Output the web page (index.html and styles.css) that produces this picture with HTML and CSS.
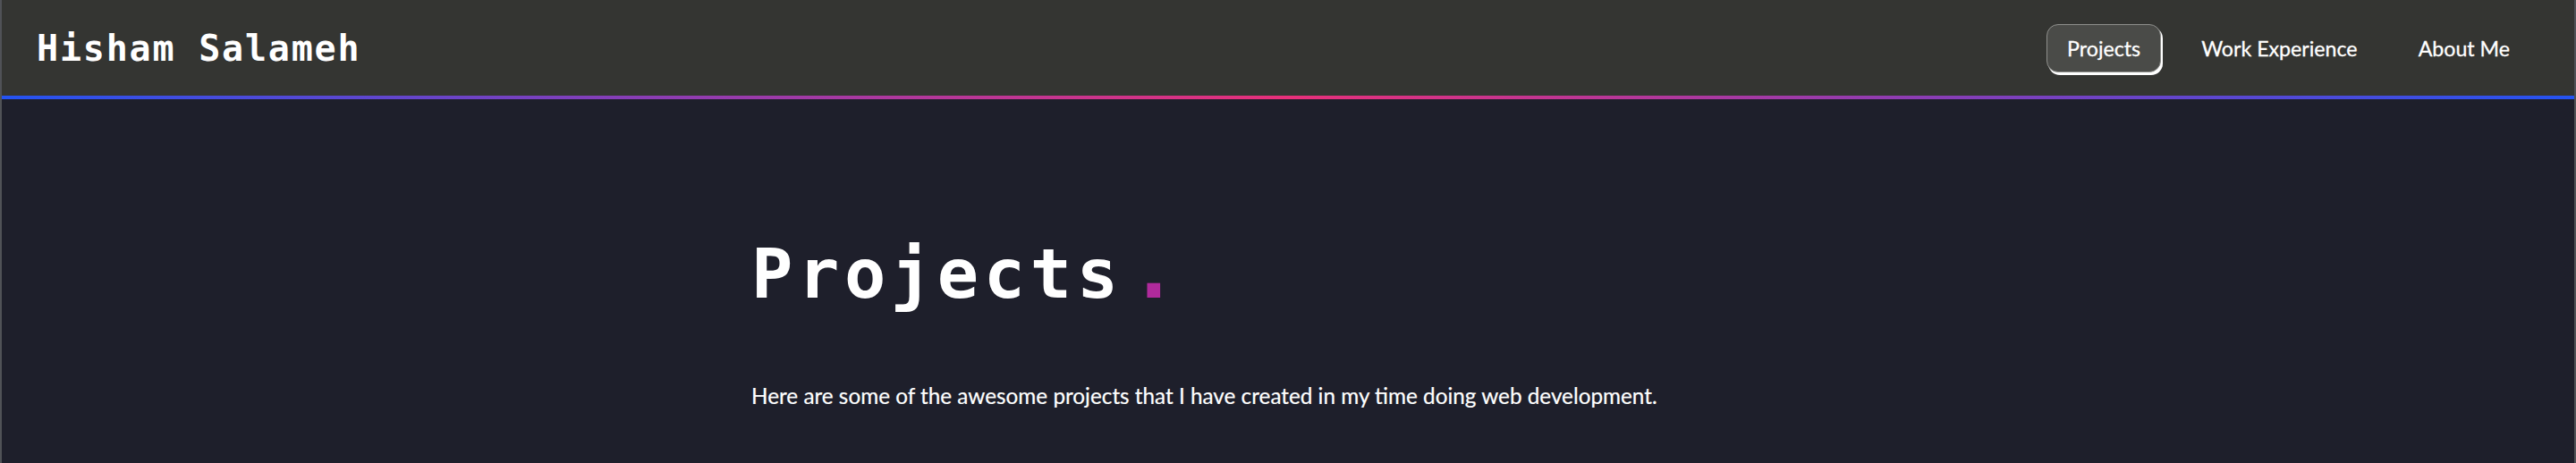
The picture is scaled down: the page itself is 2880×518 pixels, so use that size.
FILE: index.html
```html
<!DOCTYPE html>
<html lang="en">
<head>
<meta charset="utf-8">
<title>Hisham Salameh - Projects</title>
<link rel="stylesheet" href="styles.css">
</head>
<body>
<div class="frame">
  <header class="site-header">
    <a class="brand" href="#">Hisham Salameh</a>
    <nav class="nav">
      <a class="nav-link active" href="#">Projects</a>
      <a class="nav-link" href="#">Work Experience</a>
      <a class="nav-link" href="#">About Me</a>
    </nav>
  </header>
  <div class="rule"></div>
  <main class="content">
    <h1 class="title">Projects<span class="dot">.</span></h1>
    <p class="intro">Here are some of the awesome projects that I have created in my time doing web development.</p>
  </main>
</div>
</body>
</html>
```

FILE: styles.css
```css
html, body {
  margin: 0;
  padding: 0;
  background: #1e1f2b;
}

.frame {
  min-height: 518px;
  box-sizing: border-box;
  border-left: 2px solid #505257;
  border-right: 2px solid #505257;
  background: #1e1f2b;
  color: #ffffff;
  font-family: Lato, "Noto Sans", sans-serif;
}

.site-header {
  height: 107px;
  background: #343532;
  display: flex;
  align-items: center;
  justify-content: space-between;
  padding: 0 49px 0 39px;
}

.brand {
  font-family: "DejaVu Sans Mono", monospace;
  font-weight: bold;
  font-size: 40px;
  letter-spacing: 1.8px;
  color: #ffffff;
  text-decoration: none;
}

.nav {
  display: flex;
  align-items: center;
  gap: 22px;
}

.nav-link {
  font-family: Lato, "Noto Sans", sans-serif;
  font-size: 23.2px;
  line-height: 30px;
  color: #ffffff;
  text-decoration: none;
  padding: 11px 22px;
  border: 1px solid transparent;
  border-radius: 13px;
  -webkit-text-stroke: 0.3px #ffffff;
}

.nav-link.active {
  background: #4a4b48;
  border-color: #8f908d;
  box-shadow: 2px 3px 0 0 #ffffff;
}

.rule {
  height: 4px;
  background: linear-gradient(90deg, #2453f2 0%, #8a3db5 25%, #e8307a 50%, #8a3db5 75%, #2453f2 100%);
}

.content {
  max-width: 1200px;
  margin: 0 auto;
  padding-top: 157px;
}

.title {
  margin: 0;
  font-family: "DejaVu Sans Mono", monospace;
  font-weight: bold;
  font-size: 77px;
  line-height: 1;
  letter-spacing: 5.6px;
}

.dot {
  color: #b02a9c;
  font-size: 90px;
  line-height: 0;
  margin-left: 7px;
}

.intro {
  margin: 80px 0 0;
  font-size: 24.3px;
  line-height: 36px;
  -webkit-text-stroke: 0.2px #ffffff;
}
```
